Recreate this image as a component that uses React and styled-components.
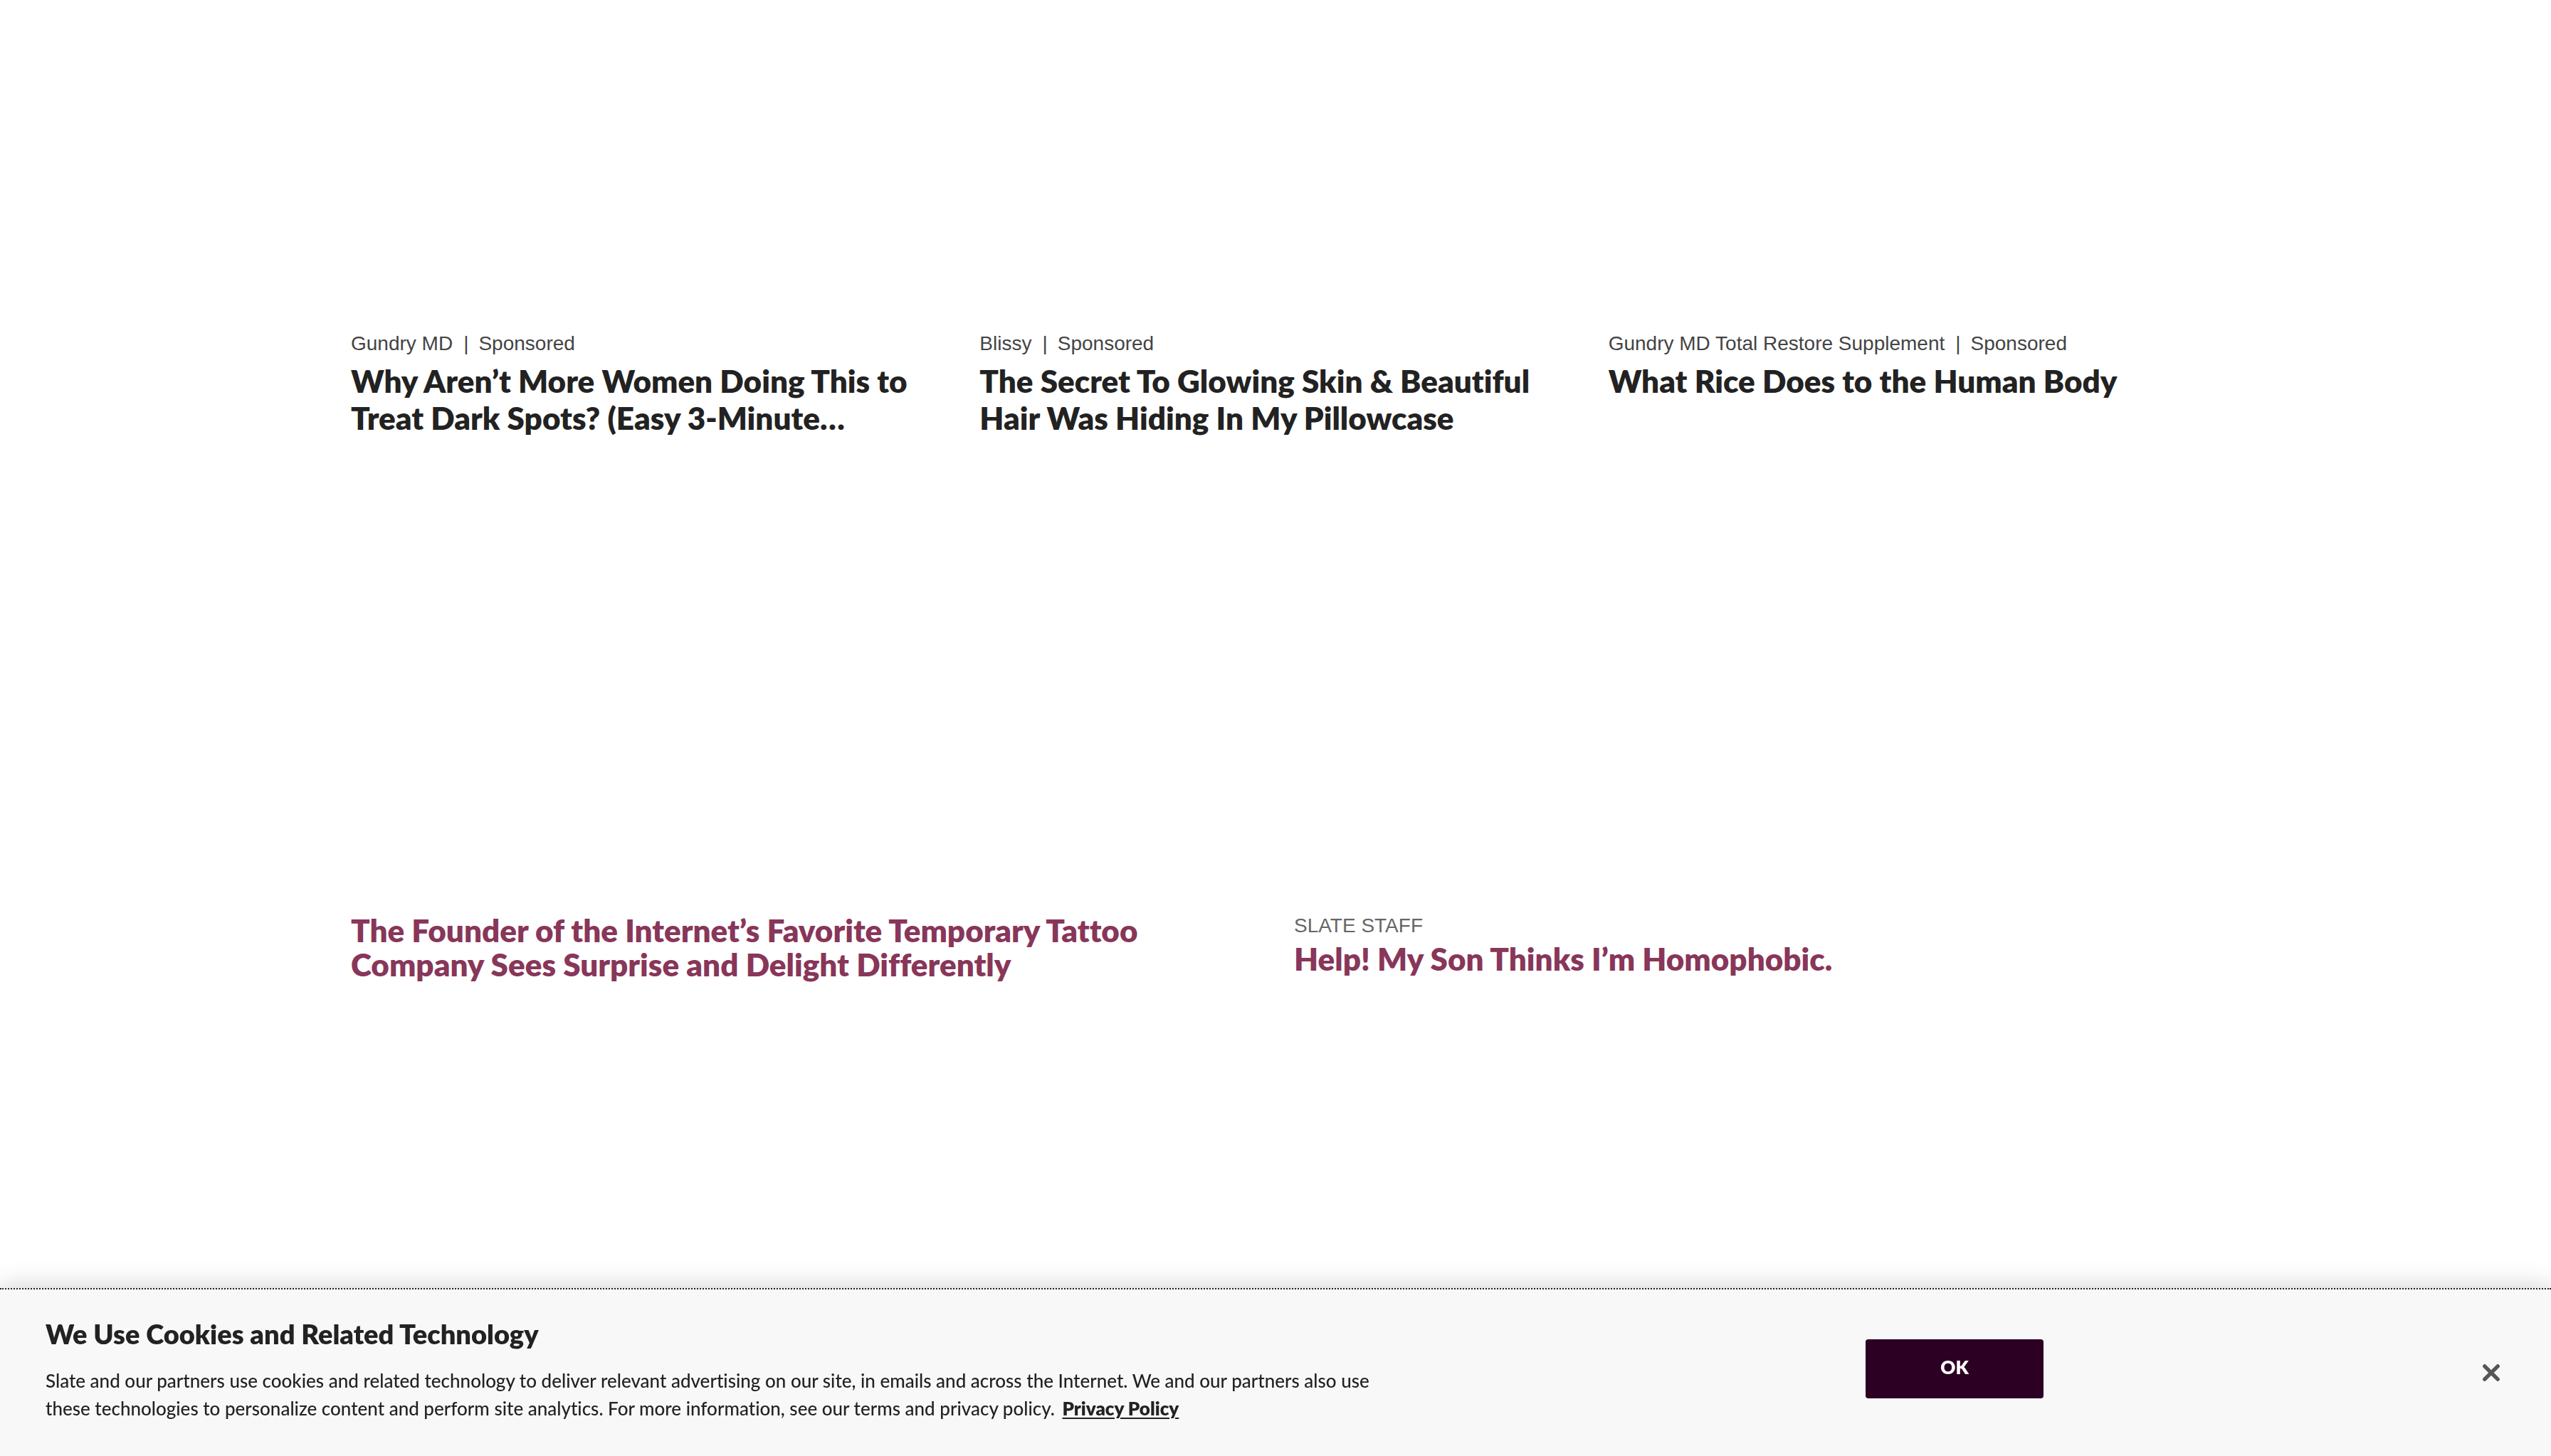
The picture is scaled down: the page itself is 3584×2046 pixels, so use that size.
import React from "react";
import styled, { createGlobalStyle } from "styled-components";

const GlobalStyle = createGlobalStyle`
  *, *::before, *::after { box-sizing: border-box; }
  body {
    margin: 0;
    background: #fff;
    color: #222;
    font-family: Lato, "Open Sans", sans-serif;
    font-variant-ligatures: none;
  }
`;

const Page = styled.main`
  max-width: 2598px;
  margin: 0 auto;
  padding: 465px 0 670px;
`;

const StoryGrid = styled.section`
  display: grid;
  grid-template-columns: repeat(${(p) => p.$columns}, minmax(0, 1fr));
  gap: 52px;

  & + & {
    margin-top: 670px;
  }
`;

const Story = styled.article`
  display: flex;
  flex-direction: column;
`;

const Meta = styled.p`
  margin: 0;
  font: 400 28px/36px "Liberation Sans", Arial, sans-serif;
  color: ${(p) => p.$color};
`;

const Divider = styled.span`
  margin: 0 14px 0 15px;
`;

const Headline = styled.h3`
  margin: ${(p) => p.$gap}px 0 0;
  max-width: ${(p) => p.$measure}px;
  font-size: 44px;
  line-height: ${(p) => p.$leading}px;
  font-weight: 800;
`;

const StoryLink = styled.a`
  color: ${(p) => p.$color};
  text-decoration: none;
`;

const Banner = styled.aside`
  position: fixed;
  left: 0;
  right: 0;
  bottom: 0;
  display: grid;
  grid-template-columns: minmax(0, 1fr) 250px 641px;
  align-items: center;
  padding: 39px 72px 47px 64px;
  border-top: 2px dotted #222;
  background: #f8f8f8;
  background-clip: padding-box;
  box-shadow: 0 0 36px rgba(0, 0, 0, 0.2);
`;

const BannerText = styled.div`
  max-width: 1900px;
`;

const BannerTitle = styled.h2`
  margin: 0 0 24px;
  font-size: 38px;
  line-height: 46px;
  font-weight: 800;
`;

const BannerCopy = styled.p`
  margin: 0;
  font-size: 26px;
  line-height: 39px;
  font-weight: 500;
`;

const PolicyLink = styled.a`
  margin-left: 4px;
  color: inherit;
  font-weight: 800;
  text-decoration: underline;
  text-decoration-thickness: 2px;
  text-underline-offset: 3px;
`;

const AcceptButton = styled.button`
  height: 83px;
  margin-bottom: 4px;
  padding: 0 0 4px;
  border: 0;
  border-radius: 4px;
  background: #2c0022;
  color: #fff;
  font: 800 26px/32px Lato, "Open Sans", sans-serif;
  cursor: pointer;
`;

const CloseButton = styled.button`
  justify-self: end;
  display: flex;
  padding: 8px 0 0;
  border: 0;
  background: none;
  color: #565656;
  cursor: pointer;
`;

const sponsored = [
  { sponsor: "Gundry MD", title: "Why Aren’t More Women Doing This to Treat Dark Spots? (Easy 3-Minute…" },
  { sponsor: "Blissy", title: "The Secret To Glowing Skin & Beautiful Hair Was Hiding In My Pillowcase" },
  { sponsor: "Gundry MD Total Restore Supplement", title: "What Rice Does to the Human Body" },
];

const stories = [
  { title: "The Founder of the Internet’s Favorite Temporary Tattoo Company Sees Surprise and Delight Differently" },
  { byline: "SLATE STAFF", title: "Help! My Son Thinks I’m Homophobic." },
];

export default function App() {
  return (
    <>
      <GlobalStyle />
      <Page>
        <StoryGrid $columns={3}>
          {sponsored.map(({ sponsor, title }) => (
            <Story key={title}>
              <Meta $color="#444">
                {sponsor}
                <Divider>|</Divider>
                Sponsored
              </Meta>
              <Headline $gap={8} $leading={52} $measure={800}>
                <StoryLink href="#" $color="#222">{title}</StoryLink>
              </Headline>
            </Story>
          ))}
        </StoryGrid>
        <StoryGrid $columns={2}>
          {stories.map(({ byline, title }) => (
            <Story key={title}>
              {byline && <Meta $color="#666">{byline}</Meta>}
              <Headline $gap={byline ? 4 : 0} $leading={48} $measure={1200}>
                <StoryLink href="#" $color="#883659">{title}</StoryLink>
              </Headline>
            </Story>
          ))}
        </StoryGrid>
      </Page>
      <Banner aria-label="Cookie notice">
        <BannerText>
          <BannerTitle>We Use Cookies and Related Technology</BannerTitle>
          <BannerCopy>
            Slate and our partners use cookies and related technology to deliver relevant advertising on our site, in
            emails and across the Internet. We and our partners also use these technologies to personalize content and
            perform site analytics. For more information, see our terms and privacy policy.{" "}
            <PolicyLink href="#">Privacy Policy</PolicyLink>
          </BannerCopy>
        </BannerText>
        <AcceptButton type="button">OK</AcceptButton>
        <CloseButton type="button" aria-label="Close">
          <svg width="24" height="24" viewBox="0 0 24 24" fill="none" stroke="currentColor" strokeWidth="5.4" strokeLinecap="round">
            <path d="M2.8 2.8 21.2 21.2M21.2 2.8 2.8 21.2" />
          </svg>
        </CloseButton>
      </Banner>
    </>
  );
}
